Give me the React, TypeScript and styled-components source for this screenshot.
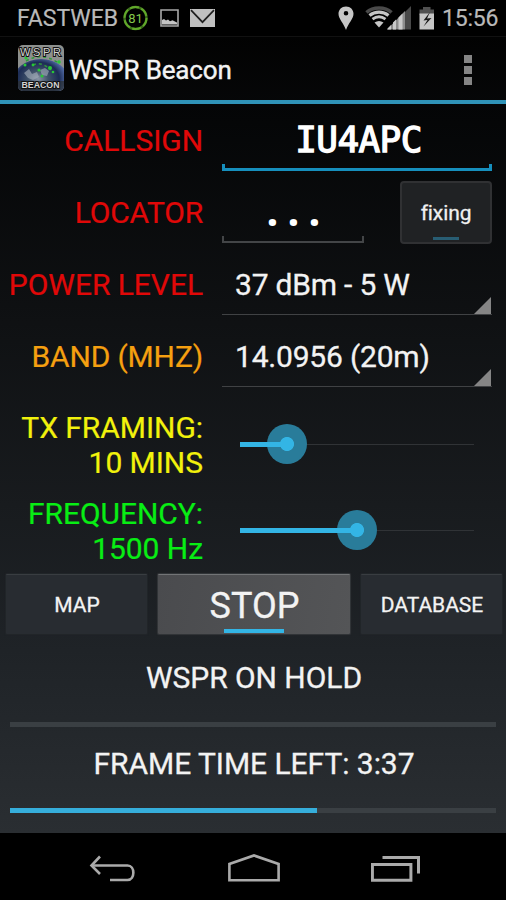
import React from "react";
import styled, { createGlobalStyle } from "styled-components";

const GlobalStyle = createGlobalStyle`
  * { box-sizing: border-box; }
  body { margin: 0; background: #000; font-family: Roboto, "Liberation Sans", sans-serif; color: #f3f3f3; }
`;

const Screen = styled.div`
  width: 506px;
  height: 900px;
  display: flex;
  flex-direction: column;
  background: #000;
  overflow: hidden;
`;

const StatusBar = styled.header`
  height: 36px;
  display: flex;
  align-items: center;
  padding: 0 8px 0 17px;
  color: #b9b9b9;
  font-size: 23px;
  line-height: 36px;
  -webkit-text-stroke: 0.2px currentColor;
  svg { display: block; flex: none; }
`;
const Carrier = styled.span`width: 106px; padding-top: 2px;`;
const StatusIcons = styled.div`display: flex; align-items: center;`;
const StatusRight = styled.div`margin-left: auto; display: flex; align-items: center;`;
const Clock = styled.span`
  width: 56px;
  margin-left: 7px;
  padding-top: 2px;
  letter-spacing: -0.2px;
`;

const ActionBar = styled.div`
  height: 68px;
  display: flex;
  align-items: center;
  padding: 0 33px 4px 18px;
  box-shadow: inset 0 1px #111, inset 0 -4px #2f93b8;
  background: linear-gradient(#020202, #060708);
`;
const Title = styled.h1`
  flex: 1;
  margin: 4px 0 0 5px;
  font-size: 26px;
  font-weight: 400;
  line-height: 34px;
  letter-spacing: -0.15px;
  -webkit-text-stroke: 0.4px currentColor;
`;
const Overflow = styled.div`
  display: grid;
  gap: 3px;
  width: 8px;
  margin: 3px 1px 0 0;
  i { width: 8px; height: 8px; background: #858585; }
`;

const Content = styled.main`
  height: 729px;
  display: flex;
  flex-direction: column;
  background: linear-gradient(#040506 0%, #0f1113 30%, #181b1e 55%, #1f2327 75%, #2a2e32 100%);
`;
const Row = styled.div<{ $h: number; $top?: number }>`
  height: ${p => p.$h}px;
  margin-top: ${p => p.$top ?? 0}px;
  display: flex;
  align-items: center;
  padding-right: 14px;
`;
const Label = styled.label<{ $color: string; $ls?: number }>`
  width: 203px;
  flex: none;
  padding-top: 2px;
  text-align: right;
  white-space: pre-line;
  color: ${p => p.$color};
  font-size: 30px;
  line-height: 34.6px;
  letter-spacing: ${p => p.$ls ?? -0.05}px;
  -webkit-text-stroke: 0.2px currentColor;
`;
const Field = styled.div`
  flex: 1;
  height: 100%;
  margin-left: 19px;
  display: flex;
`;
const Input = styled.div<{ $color: string; $line: number; $w?: number }>`
  width: ${p => (p.$w ? p.$w + "px" : "100%")};
  height: 67px;
  padding-left: 3px;
  display: flex;
  justify-content: center;
  color: #fff;
  font: 36px/72px "DejaVu Sans Mono", monospace;
  letter-spacing: -0.6px;
  -webkit-text-stroke: 1.3px currentColor;
  background:
    linear-gradient(${p => p.$color}, ${p => p.$color}) 0 100% / 100% ${p => p.$line}px no-repeat,
    linear-gradient(${p => p.$color}, ${p => p.$color}) 0 100% / ${p => p.$line}px 7px no-repeat,
    linear-gradient(${p => p.$color}, ${p => p.$color}) 100% 100% / ${p => p.$line}px 7px no-repeat;
`;
const Dots = styled.span`
  padding-left: 7px;
  font: bold 42px/67px "Noto Sans", sans-serif;
  letter-spacing: 9.2px;
  -webkit-text-stroke: 0;
`;
const FixButton = styled.button`
  width: 92px;
  height: 63px;
  margin: 5px 0 0 auto;
  padding: 0;
  display: flex;
  flex-direction: column;
  align-items: center;
  border: 2px solid #303133;
  border-radius: 4px;
  background: #202224;
  color: #f0f0f0;
  font: 21px/60px Roboto, sans-serif;
  letter-spacing: -0.1px;
  -webkit-text-stroke: 0.3px currentColor;
  &::after { content: ""; width: 26px; height: 3px; margin-top: -6px; background: #285d73; flex: none; }
`;
const Spinner = styled.div`
  width: 100%;
  height: 67px;
  padding-left: 13px;
  display: flex;
  border-bottom: 1px solid #404244;
  font-size: 30px;
  line-height: 74px;
  letter-spacing: -0.2px;
  white-space: pre;
  -webkit-text-stroke: 0.3px currentColor;
  svg { margin: auto 1px 0 auto; display: block; }
`;

const Slider = styled.div`
  flex: 1;
  height: 40px;
  margin: -2px 18px 0 37px;
  display: flex;
  align-items: center;
`;
const Filled = styled.div<{ $w: number }>`
  width: ${p => p.$w}px;
  height: 5px;
  margin-top: 1px;
  background: #33b5e5;
`;
const Thumb = styled.div`
  position: relative;
  z-index: 1;
  width: 40px;
  height: 40px;
  flex: none;
  margin: 0 -20px;
  border-radius: 50%;
  background: radial-gradient(circle, #33b5e5 6.6px, rgba(51, 181, 229, 0) 7.4px),
    linear-gradient(transparent 18px, #33b5e5 18px 23px, transparent 23px) 0 0 / 20px 100% no-repeat, #297c9a;
`;
const Track = styled.div`flex: 1; height: 1px; margin-top: 1px; background: #303336;`;

const Buttons = styled.div`
  height: 60px;
  display: grid;
  grid-template-columns: 141px 192px 141px;
  gap: 11px;
  padding-left: 6px;
`;
const Button = styled.button<{ $active?: boolean }>`
  height: 60px;
  padding: 0 0 0 1px;
  border: 0;
  border-top: 1px solid ${p => (p.$active ? "#727476" : "#393d41")};
  border-radius: 1px;
  display: flex;
  flex-direction: column;
  align-items: center;
  color: #f3f3f3;
  background: ${p => (p.$active ? "linear-gradient(100deg, #4a4b4e, #545557)" : "#282c31")};
  box-shadow: 0 0 1px 1px ${p => (p.$active ? "#34373a" : "#22262a")};
  font: ${p => (p.$active ? "36px/63px" : "21px/61px")} Roboto, sans-serif;
  -webkit-text-stroke: 0.3px currentColor;
  &::after {
    content: "";
    display: ${p => (p.$active ? "block" : "none")};
    width: 60px;
    height: 4px;
    margin: -9px 1px 0 0;
    flex: none;
    background: #33b5e5;
  }
`;
const Message = styled.p<{ $top: number; $x?: number }>`
  margin: ${p => p.$top}px 0 0 ${p => p.$x ?? 0}px;
  text-align: center;
  font-size: 30px;
  line-height: 34px;
  letter-spacing: -0.05px;
  -webkit-text-stroke: 0.3px currentColor;
`;
const Progress = styled.div`
  height: 5px;
  margin: 27px 10px 0;
  background: #3a3f43;
`;
const ProgressFill = styled.div<{ $w: number }>`
  width: ${p => p.$w}%;
  height: 5px;
  background: #36aedb;
`;

const NavBar = styled.nav`
  height: 67px;
  display: flex;
  align-items: center;
  background: #000;
  svg { display: block; }
`;

const BatteryBadge = () => (
  <svg width="26" height="28" viewBox="0 0 26 28">
    <circle cx="12.5" cy="14" r="11" fill="none" stroke="#3c6e1c" strokeWidth="2.4" />
    <circle cx="12.5" cy="14" r="11" fill="none" stroke="#62a82b" strokeWidth="2" strokeDasharray="9 2.5" />
    <text x="12.5" y="18.8" textAnchor="middle" fontFamily="Roboto, sans-serif" fontSize="13" fill="#83c64b">81</text>
  </svg>
);
const PictureIcon = () => (
  <svg width="19" height="18" viewBox="0 0 19 18">
    <path d="M1 1h17v16H1z" fill="none" stroke="#a8a8a8" strokeWidth="1.6" />
    <path d="M2 15.5v-4.500l2-1 2 1.500 2-1 2 1.800 2.500-1 4.500 2.200v2z" fill="#c4c4c4" />
  </svg>
);
const MailIcon = () => (
  <svg width="25" height="18" viewBox="0 0 25 18">
    <path d="M0 0h25v18H0z" fill="#c0c0c0" />
    <path d="M1 1.2l11.5 12L24 1.2" fill="none" stroke="#202020" strokeWidth="1.7" />
  </svg>
);
const PinIcon = () => (
  <svg width="16" height="25" viewBox="0 0 16 25">
    <path fillRule="evenodd" d="M8 .5C3.6.5.5 3.7.5 7.8.5 13 5.5 17 8 24c2.500-7 7.500-11 7.500-16.200C15.500 3.700 12.400.5 8 .5zM8 5a2.300 2.300 0 1 1 0 4.600A2.300 2.300 0 0 1 8 5z" fill="#c6c6c6" />
  </svg>
);
const WifiSignal = () => (
  <svg width="47" height="24" viewBox="0 0 47 24">
    <path d="M1.5 6.5C8 .5 20 .5 26.500 6.500" fill="none" stroke="#4a4a4a" strokeWidth="3.6" />
    <path d="M4.5 9.5C10 5 18 5 23.500 9.500" fill="none" stroke="#c6c6c6" strokeWidth="3.2" />
    <path d="M7.5 13.2c4-3 9-3 13 0" fill="none" stroke="#c6c6c6" strokeWidth="2.8" />
    <path d="M9.5 16.5c3-2 6-2 9 0L14 21.500z" fill="#c6c6c6" />
    <path d="M22 23.5L40 5v18.500z" fill="#8c8c8c" />
    <path d="M22.5 23.5v-1l3.500-3.500v4.500zM28 23.500v-7l3-3v10zM33.500 23.500V11.500l4-4v16z" fill="#c9c9c9" />
    <path d="M40 23.5V6l6-6v23.500z" fill="#484848" />
  </svg>
);
const BatteryIcon = () => (
  <svg width="16" height="23" viewBox="0 0 16 23">
    <path d="M4 0h7.5v2.5H15V8H.5V2.500H4z" fill="#505050" />
    <path d="M.5 6.5H15V22.500H.5z" fill="#c6c6c6" />
    <path d="M11 5L4.5 13.5l4-.5-4 6.500 8-8.500-4.500.5z" fill="#171717" />
  </svg>
);
const AppIcon = () => (
  <svg width="46" height="46" viewBox="0 0 46 46">
    <defs>
      <clipPath id="tile"><rect width="46" height="46" rx="5" /></clipPath>
      <radialGradient id="globe" cx="45%" cy="45%">
        <stop offset="0" stopColor="#8995a5" />
        <stop offset=".35" stopColor="#40536a" />
        <stop offset=".75" stopColor="#1c2c55" />
        <stop offset="1" stopColor="#506aa5" />
      </radialGradient>
    </defs>
    <g clipPath="url(#tile)">
      <path d="M0 0h46v46H0z" fill="#8d908e" />
      <ellipse cx="23" cy="36" rx="28" ry="22" fill="url(#globe)" />
      <path d="M0 36h46v10H0z" fill="#2c3135" opacity=".75" />
      <path d="M6 28l5-4 3 5 5-2 2 5-6 3-5-2zM22 25l5-2 4 3-2 5-5-1z" fill="#a6b1bd" opacity=".6" />
      <path d="M8 16q15-9 31 1M15 20q8-4 18 5" fill="none" stroke="#2f9a3b" strokeWidth="1.5" strokeDasharray="3 3" />
      <g fill="#27c936">
        <circle cx="8" cy="13" r="1.6" /><circle cx="7" cy="20" r="1.5" /><circle cx="15" cy="20" r="1.4" />
        <circle cx="21" cy="25" r="1.6" /><circle cx="32" cy="23" r="2" /><circle cx="41" cy="17" r="1.8" />
        <circle cx="24" cy="31" r="1.5" /><circle cx="35" cy="27" r="1.3" />
      </g>
    </g>
    <g fontFamily="Liberation Sans, sans-serif" textAnchor="middle" paintOrder="stroke" stroke="#101010" strokeWidth="2" fill="#d4d4d4">
      <text x="22.5" y="10.5" fontSize="11" textLength="41">WSPR</text>
      <text x="22.5" y="43" fontSize="9.5" fontWeight="bold" textLength="38" lengthAdjust="spacingAndGlyphs">BEACON</text>
    </g>
  </svg>
);
const Corner = () => (
  <svg width="17" height="17" viewBox="0 0 17 17"><path d="M17 0v17H0z" fill="#858585" /></svg>
);

const IconSlot = styled.div<{ $l?: number; $t?: number }>`
  margin-left: ${p => p.$l ?? 0}px;
  padding-top: ${p => p.$t ?? 0}px;
`;

const BackIcon = () => (
  <svg width="48" height="28" viewBox="0 0 48 28">
    <path d="M2 10.5h36.500c7.800 0 7.800 14.500 0 14.500H21" fill="none" stroke="#aaa" strokeWidth="2.6" />
    <path d="M11 1.5L2.500 10.500l8.500 8.500" fill="none" stroke="#aaa" strokeWidth="2.6" />
  </svg>
);
const HomeIcon = () => (
  <svg width="52" height="28" viewBox="0 0 52 28">
    <path d="M1.4 26.200V10L26 1.500 50.600 10v16.200z" fill="none" stroke="#aaa" strokeWidth="2.6" />
  </svg>
);
const RecentsIcon = () => (
  <svg width="50" height="28" viewBox="0 0 50 28">
    <path d="M1.4 10.400h38.500v15.800H1.400zM11.500 3.400H47.500V19.400" fill="none" stroke="#aaa" strokeWidth="3" />
  </svg>
);

export default function App() {
  return (
    <Screen>
      <GlobalStyle />
      <StatusBar>
        <Carrier>FASTWEB</Carrier>
        <StatusIcons>
          <BatteryBadge />
          <IconSlot $l={11}><PictureIcon /></IconSlot>
          <IconSlot $l={11}><MailIcon /></IconSlot>
        </StatusIcons>
        <StatusRight>
          <PinIcon />
          <IconSlot $l={11}><WifiSignal /></IconSlot>
          <IconSlot $l={7}><BatteryIcon /></IconSlot>
          <Clock>15:56</Clock>
        </StatusRight>
      </StatusBar>
      <ActionBar>
        <AppIcon />
        <Title>WSPR Beacon</Title>
        <Overflow><i /><i /><i /></Overflow>
      </ActionBar>
      <Content>
        <Row $h={72}>
          <Label $color="#e00808">CALLSIGN</Label>
          <Field><Input $color="#168fbd" $line={3}>IU4APC</Input></Field>
        </Row>
        <Row $h={72}>
          <Label $color="#e00808" $ls={-0.2}>LOCATOR</Label>
          <Field>
            <Input $color="#434547" $line={2} $w={142}><Dots>...</Dots></Input>
            <FixButton>fixing</FixButton>
          </Field>
        </Row>
        <Row $h={72}>
          <Label $color="#e00808">POWER LEVEL</Label>
          <Field><Spinner>37 dBm - 5 W<Corner /></Spinner></Field>
        </Row>
        <Row $h={72}>
          <Label $color="#f5a010" $ls={-0.15}>BAND (MHZ)</Label>
          <Field><Spinner>14.0956 (20m)<Corner /></Spinner></Field>
        </Row>
        <Row $h={87} $top={9}>
          <Label $color="#f2f20c">{"TX FRAMING:\n10 MINS"}</Label>
          <Slider><Filled $w={47} /><Thumb /><Track /></Slider>
        </Row>
        <Row $h={86}>
          <Label $color="#08ee14">{"FREQUENCY:\n1500 Hz"}</Label>
          <Slider><Filled $w={117} /><Thumb /><Track /></Slider>
        </Row>
        <Buttons>
          <Button>MAP</Button>
          <Button $active>STOP</Button>
          <Button>DATABASE</Button>
        </Buttons>
        <Message $top={27} $x={2}>WSPR ON HOLD</Message>
        <Progress />
        <Message $top={20} $x={2}>FRAME TIME LEFT: 3:37</Message>
        <Progress><ProgressFill $w={63.2} /></Progress>
      </Content>
      <NavBar>
        <IconSlot $l={89} $t={4}><BackIcon /></IconSlot>
        <IconSlot $l={91} $t={3}><HomeIcon /></IconSlot>
        <IconSlot $l={91} $t={3}><RecentsIcon /></IconSlot>
      </NavBar>
    </Screen>
  );
}
